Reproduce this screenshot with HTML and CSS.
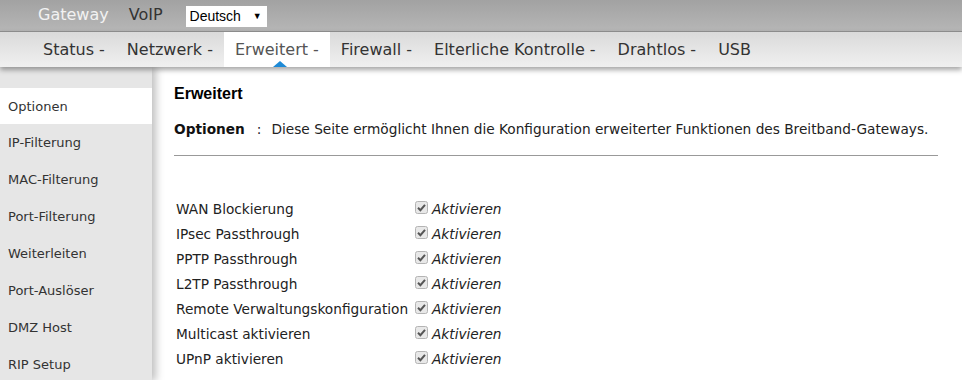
FILE: index.html
```html
<!DOCTYPE html>
<html lang="de">
<head>
<meta charset="utf-8">
<title>Erweitert - Optionen</title>
<link rel="stylesheet" href="styles.css">
</head>
<body>
<header class="header">
  <div class="topbar">
    <span class="top-link top-link--active">Gateway</span>
    <span class="top-link top-link--voip">VoIP</span>
    <div class="lang-select"><span>Deutsch</span><span class="lang-arrow">&#9660;</span></div>
  </div>
  <nav class="nav">
    <span class="nav-item">Status -</span>
    <span class="nav-item">Netzwerk -</span>
    <span class="nav-item nav-item--active">Erweitert -</span>
    <span class="nav-item">Firewall -</span>
    <span class="nav-item">Elterliche Kontrolle -</span>
    <span class="nav-item">Drahtlos -</span>
    <span class="nav-item">USB</span>
  </nav>
</header>
<div class="main">
  <aside class="sidebar">
    <div class="side-item side-item--active">Optionen</div>
    <div class="side-item">IP-Filterung</div>
    <div class="side-item">MAC-Filterung</div>
    <div class="side-item">Port-Filterung</div>
    <div class="side-item">Weiterleiten</div>
    <div class="side-item">Port-Auslöser</div>
    <div class="side-item">DMZ Host</div>
    <div class="side-item">RIP Setup</div>
  </aside>
  <section class="content">
    <h1 class="title">Erweitert</h1>
    <p class="desc"><b>Optionen</b><span class="colon">:</span>Diese Seite ermöglicht Ihnen die Konfiguration erweiterter Funktionen des Breitband-Gateways.</p>
    <hr class="rule">
    <div class="options">
      <div class="opt-label">WAN Blockierung</div><div class="opt-val"><span class="cb"><svg viewBox="0 0 13 13" width="13" height="13"><rect x="0.5" y="0.5" width="12" height="12" rx="2" fill="#e8e8e8" stroke="#b4b4b4"/><path d="M3 6.8 L5.4 9.2 L10 3.8" fill="none" stroke="#555" stroke-width="2"/></svg></span><i>Aktivieren</i></div>
      <div class="opt-label">IPsec Passthrough</div><div class="opt-val"><span class="cb"><svg viewBox="0 0 13 13" width="13" height="13"><rect x="0.5" y="0.5" width="12" height="12" rx="2" fill="#e8e8e8" stroke="#b4b4b4"/><path d="M3 6.8 L5.4 9.2 L10 3.8" fill="none" stroke="#555" stroke-width="2"/></svg></span><i>Aktivieren</i></div>
      <div class="opt-label">PPTP Passthrough</div><div class="opt-val"><span class="cb"><svg viewBox="0 0 13 13" width="13" height="13"><rect x="0.5" y="0.5" width="12" height="12" rx="2" fill="#e8e8e8" stroke="#b4b4b4"/><path d="M3 6.8 L5.4 9.2 L10 3.8" fill="none" stroke="#555" stroke-width="2"/></svg></span><i>Aktivieren</i></div>
      <div class="opt-label">L2TP Passthrough</div><div class="opt-val"><span class="cb"><svg viewBox="0 0 13 13" width="13" height="13"><rect x="0.5" y="0.5" width="12" height="12" rx="2" fill="#e8e8e8" stroke="#b4b4b4"/><path d="M3 6.8 L5.4 9.2 L10 3.8" fill="none" stroke="#555" stroke-width="2"/></svg></span><i>Aktivieren</i></div>
      <div class="opt-label">Remote Verwaltungskonfiguration</div><div class="opt-val"><span class="cb"><svg viewBox="0 0 13 13" width="13" height="13"><rect x="0.5" y="0.5" width="12" height="12" rx="2" fill="#e8e8e8" stroke="#b4b4b4"/><path d="M3 6.8 L5.4 9.2 L10 3.8" fill="none" stroke="#555" stroke-width="2"/></svg></span><i>Aktivieren</i></div>
      <div class="opt-label">Multicast aktivieren</div><div class="opt-val"><span class="cb"><svg viewBox="0 0 13 13" width="13" height="13"><rect x="0.5" y="0.5" width="12" height="12" rx="2" fill="#e8e8e8" stroke="#b4b4b4"/><path d="M3 6.8 L5.4 9.2 L10 3.8" fill="none" stroke="#555" stroke-width="2"/></svg></span><i>Aktivieren</i></div>
      <div class="opt-label">UPnP aktivieren</div><div class="opt-val"><span class="cb"><svg viewBox="0 0 13 13" width="13" height="13"><rect x="0.5" y="0.5" width="12" height="12" rx="2" fill="#e8e8e8" stroke="#b4b4b4"/><path d="M3 6.8 L5.4 9.2 L10 3.8" fill="none" stroke="#555" stroke-width="2"/></svg></span><i>Aktivieren</i></div>
    </div>
    <div class="subhead">NAT ALG Status</div>
  </section>
</div>
</body>
</html>
```
FILE: styles.css
```css
html, body {
  margin: 0;
  padding: 0;
  background: #fff;
  overflow: hidden;
}
body {
  font-family: "DejaVu Sans", Verdana, sans-serif;
  color: #333;
  width: 962px;
  height: 380px;
}
.header {
  position: relative;
  z-index: 2;
}
.topbar {
  height: 31px;
  display: flex;
  align-items: center;
  padding-left: 38px;
  background: linear-gradient(#a2a2a2, #b6b6b6);
  box-sizing: border-box;
}
.top-link {
  font-size: 16px;
  color: #333;
  margin-right: 20px;
  padding-bottom: 3px;
}
.top-link--voip {
  margin-right: 23px;
}
.top-link--active {
  color: #f2f2f2;
}
.lang-select {
  display: flex;
  align-items: center;
  justify-content: space-between;
  width: 81px;
  height: 21px;
  box-sizing: border-box;
  background: #fff;
  padding: 0 5px 0 4px;
  font-family: "Liberation Sans", Arial, sans-serif;
  font-size: 14px;
  color: #000;
  margin-top: 1px;
}
.lang-arrow {
  font-size: 9px;
}
.nav {
  height: 35px;
  display: flex;
  align-items: stretch;
  padding-left: 32px;
  background: linear-gradient(#dadada, #f0f0f0);
  border-top: 1px solid #8c8c8c;
  box-shadow: 0 3px 5px rgba(0, 0, 0, 0.35);
}
.nav-item {
  display: flex;
  align-items: center;
  padding: 0 11px;
  font-size: 16px;
  color: #333;
  position: relative;
  white-space: pre;
}
.nav-item--active {
  background: #fff;
  color: #555;
}
.nav-item--active::after {
  content: "";
  position: absolute;
  left: 49px;
  bottom: 0;
  border-left: 7px solid transparent;
  border-right: 7px solid transparent;
  border-bottom: 6px solid #1e8ad6;
}
.main {
  display: flex;
  height: 314px;
}
.sidebar {
  width: 152px;
  flex: none;
  background: #e6e6e6;
  padding-top: 21px;
  box-shadow: 4px 0 8px rgba(0, 0, 0, 0.25);
  position: relative;
  z-index: 1;
}
.side-item {
  height: 37px;
  display: flex;
  align-items: center;
  padding-left: 8px;
  font-size: 13px;
  color: #333;
}
.side-item--active {
  background: #fff;
  height: 36px;
}
.content {
  flex: 1;
  padding: 17px 24px 0 22px;
}
.title {
  font-family: "Liberation Sans", Arial, sans-serif;
  font-size: 16px;
  font-weight: bold;
  color: #000;
  margin: 0;
  line-height: 20px;
}
.desc {
  margin: 15px 0 0 0;
  font-size: 13.7px;
  line-height: 20px;
  color: #222;
}
.desc b {
  color: #111;
}
.colon {
  margin: 0 10px 0 12px;
}
.rule {
  border: 0;
  border-top: 1px solid #999;
  margin: 16px 0 0 0;
}
.options {
  display: grid;
  grid-template-columns: 238px auto;
  grid-auto-rows: 25px;
  margin-top: 40px;
  padding-left: 2px;
  font-size: 13.7px;
  align-items: center;
}
.opt-label {
  color: #222;
  white-space: nowrap;
}
.opt-val {
  display: flex;
  align-items: center;
}
.cb {
  display: flex;
  margin: 0 4px 0 1px;
  position: relative;
  top: -1px;
}
.opt-val i {
  color: #222;
}
.subhead {
  margin: 6px 0 0 110px;
  font-size: 13.7px;
}
```
